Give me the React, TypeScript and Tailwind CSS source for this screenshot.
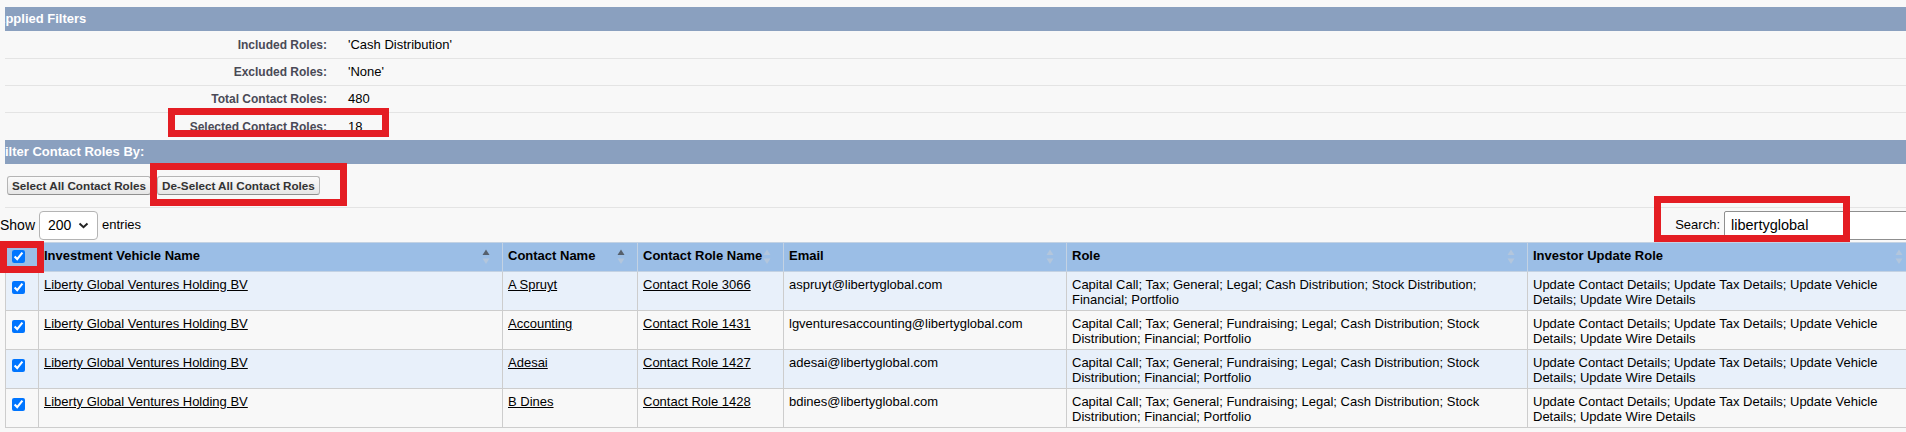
import React from "react";

type Row = {
  vehicle: string;
  contact: string;
  roleName: string;
  email: string;
  roles: string;
  updates: string;
};

const FULL_ROLES =
  "Capital Call; Tax; General; Fundraising; Legal; Cash Distribution; Stock Distribution; Financial; Portfolio";
const UPDATES = "Update Contact Details; Update Tax Details; Update Vehicle Details; Update Wire Details";

const ROWS: Row[] = [
  {
    vehicle: "Liberty Global Ventures Holding BV",
    contact: "A Spruyt",
    roleName: "Contact Role 3066",
    email: "aspruyt@libertyglobal.com",
    roles: "Capital Call; Tax; General; Legal; Cash Distribution; Stock Distribution; Financial; Portfolio",
    updates: UPDATES,
  },
  {
    vehicle: "Liberty Global Ventures Holding BV",
    contact: "Accounting",
    roleName: "Contact Role 1431",
    email: "lgventuresaccounting@libertyglobal.com",
    roles: FULL_ROLES,
    updates: UPDATES,
  },
  {
    vehicle: "Liberty Global Ventures Holding BV",
    contact: "Adesai",
    roleName: "Contact Role 1427",
    email: "adesai@libertyglobal.com",
    roles: FULL_ROLES,
    updates: UPDATES,
  },
  {
    vehicle: "Liberty Global Ventures Holding BV",
    contact: "B Dines",
    roleName: "Contact Role 1428",
    email: "bdines@libertyglobal.com",
    roles: FULL_ROLES,
    updates: UPDATES,
  },
];

const FILTERS = [
  { label: "Included Roles:", value: "'Cash Distribution'", h: "h-[28px] border-b" },
  { label: "Excluded Roles:", value: "'None'", h: "h-[27px] border-b" },
  { label: "Total Contact Roles:", value: "480", h: "h-[27px] border-b" },
  { label: "Selected Contact Roles:", value: "18", h: "h-[27px]" },
];

const COLUMNS = [
  { label: "Investment Vehicle Name", w: "w-[464px]", active: true },
  { label: "Contact Name", w: "w-[135px]", active: true },
  { label: "Contact Role Name", w: "w-[146px]", active: false },
  { label: "Email", w: "w-[283px]", active: false },
  { label: "Role", w: "w-[461px]", active: false },
  { label: "Investor Update Role", w: "w-[388px]", active: false },
];

function SortIcon({ active }: { active: boolean }) {
  return (
    <svg className="absolute right-[12px] top-[6px]" width="8" height="16" viewBox="0 0 8 16">
      <polygon points="0.5,6 4,0.5 7.5,6" fill={active ? "#56606c" : "#b3c6dc"} />
      <polygon points="0.5,9.5 7.5,9.5 4,15" fill="#b3c6dc" />
    </svg>
  );
}

function Chevron() {
  return (
    <svg width="11" height="7" viewBox="0 0 11 7">
      <path d="M1.5 1.5 L5.5 5.2 L9.5 1.5" fill="none" stroke="#222" strokeWidth="2" />
    </svg>
  );
}

function SubHeader({ title, shift }: { title: string; shift: string }) {
  return (
    <div className="h-[24px] overflow-hidden bg-[#8aa0bf]">
      <div className={`${shift} whitespace-nowrap text-[13px] font-bold leading-[24px] text-white`}>{title}</div>
    </div>
  );
}

function Btn({ children }: { children: React.ReactNode }) {
  return (
    <button className="h-[19px] rounded-[3px] border border-[#b5b5b5] border-b-[#8f8f8f] bg-linear-to-b from-[#fbfbfb] to-[#e6e6e6] px-[4px] text-[11.7px] font-bold leading-[17px] text-[#333]">
      {children}
    </button>
  );
}

const cell = "border border-[#cdcdcd] pb-[3px] pl-[5px] pr-[18px] pt-[5px] align-top leading-[15px]";

export default function App() {
  return (
    <div className="relative h-[432px] w-[1906px] overflow-hidden bg-[#f8f8f8] pt-[7px] font-['Liberation_Sans',Arial,sans-serif] text-[13px] text-black">
      <div className="ml-[5px]">
        <SubHeader title="Applied Filters" shift="-ml-[9px]" />
        {FILTERS.map((f) => (
          <div key={f.label} className={`${f.h} flex items-center border-[#e4e4e4]`}>
            <div className="w-[322px] text-right text-[12px] font-bold text-[#4a4a56]">{f.label}</div>
            <div className="ml-[21px]">{f.value}</div>
          </div>
        ))}
        <SubHeader title="Filter Contact Roles By:" shift="-ml-[8px]" />
        <div className="flex h-[44px] items-center gap-[6px] border-b border-[#e4e4e4] pl-[2px]">
          <Btn>Select All Contact Roles</Btn>
          <Btn>De-Select All Contact Roles</Btn>
        </div>
      </div>

      <div className="-mr-[20px] flex h-[34px] items-center">
        <span className="text-[14px]">Show</span>
        <div className="ml-[4px] flex h-[29px] w-[59px] items-center gap-[7px] rounded-[4px] border border-[#b4b4b4] bg-white pl-[8px] text-[14px]">
          <span>200</span>
          <Chevron />
        </div>
        <span className="ml-[4px]">entries</span>
        <div className="ml-auto flex items-center">
          <span>Search:</span>
          <div className="ml-[4px] h-[29px] w-[202px] rounded-[2px] border border-[#8f8f8f] bg-white pl-[6px] text-[14.5px] leading-[27px]">
            libertyglobal
          </div>
        </div>
      </div>

      <table className="ml-[5px] w-[1910px] table-fixed border-collapse">
        <colgroup>
          <col className="w-[33px]" />
          {COLUMNS.map((c) => (
            <col key={c.label} className={c.w} />
          ))}
        </colgroup>
        <thead>
          <tr className="bg-[#9bbee6]">
            <th className="border border-[#c3d2e3] pl-[6px] pt-[7px] align-top">
              <input type="checkbox" checked readOnly className="m-0 block h-[13px] w-[13px]" />
            </th>
            {COLUMNS.map((c) => (
              <th
                key={c.label}
                className="relative whitespace-nowrap border border-[#c3d2e3] pb-[8px] pl-[5px] pr-[18px] pt-[5px] text-left align-top font-bold leading-[15px]"
              >
                {c.label}
                <SortIcon active={c.active} />
              </th>
            ))}
          </tr>
        </thead>
        <tbody>
          {ROWS.map((r, i) => (
            <tr key={r.email} className={i % 2 === 0 ? "bg-[#e8f0fa]" : "bg-[#f8f8f8]"}>
              <td className="border border-[#cdcdcd] pl-[6px] pt-[9px] align-top">
                <input type="checkbox" checked readOnly className="m-0 block h-[13px] w-[13px]" />
              </td>
              <td className={cell}>
                <a className="text-black underline">{r.vehicle}</a>
              </td>
              <td className={cell}>
                <a className="text-black underline">{r.contact}</a>
              </td>
              <td className={cell}>
                <a className="text-black underline">{r.roleName}</a>
              </td>
              <td className={cell}>{r.email}</td>
              <td className={cell}>{r.roles}</td>
              <td className={cell}>{r.updates}</td>
            </tr>
          ))}
        </tbody>
      </table>

      {/* annotation boxes */}
      <div className="absolute left-[168px] top-[108px] h-[29px] w-[221px] border-[7px] border-[#e41d23]" />
      <div className="absolute left-[150px] top-[163px] h-[43px] w-[197px] border-[7px] border-[#e41d23]" />
      <div className="absolute left-[1654px] top-[196px] h-[46px] w-[196px] border-[7px] border-[#e41d23]" />
      <div className="absolute left-0 top-[241px] h-[32px] w-[44px] border-[7px] border-[#e41d23]" />
    </div>
  );
}
